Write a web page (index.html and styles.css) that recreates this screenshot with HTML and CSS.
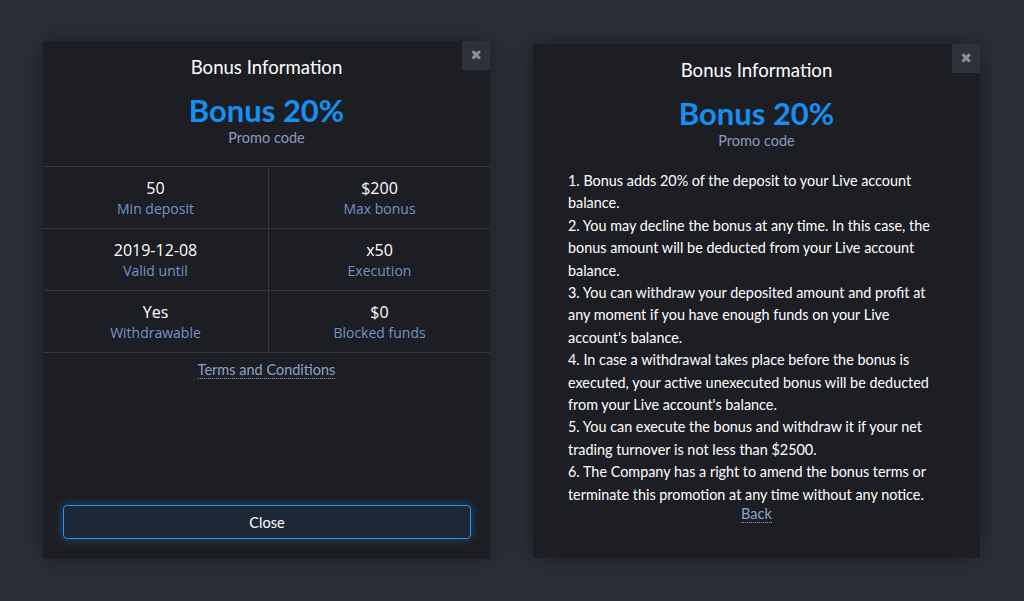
FILE: index.html
```html
<!DOCTYPE html>
<html lang="en">
<head>
  <meta charset="UTF-8">
  <title>Bonus Information</title>
  <link rel="stylesheet" href="styles.css">
</head>
<body>
<div class="page">

  <div class="modal modal-info">
    <span class="modal-close">&#10006;</span>
    <div class="modal-title">Bonus Information</div>
    <div class="bonus-name">Bonus 20%</div>
    <div class="bonus-sub">Promo code</div>

    <div class="bonus-grid">
      <div class="cell"><span class="value">50</span><span class="label">Min deposit</span></div>
      <div class="cell"><span class="value">$200</span><span class="label">Max bonus</span></div>
      <div class="cell"><span class="value">2019-12-08</span><span class="label">Valid until</span></div>
      <div class="cell"><span class="value">x50</span><span class="label">Execution</span></div>
      <div class="cell"><span class="value">Yes</span><span class="label">Withdrawable</span></div>
      <div class="cell"><span class="value">$0</span><span class="label">Blocked funds</span></div>
    </div>

    <div class="link-row"><a class="dotted" href="#">Terms and Conditions</a></div>

    <button class="btn-close">Close</button>
  </div>

  <div class="modal modal-terms">
    <span class="modal-close">&#10006;</span>
    <div class="modal-title">Bonus Information</div>
    <div class="bonus-name">Bonus 20%</div>
    <div class="bonus-sub">Promo code</div>

    <div class="terms">
      <p>1. Bonus adds 20% of the deposit to your Live account balance.</p>
      <p>2. You may decline the bonus at any time. In this case, the bonus amount will be deducted from your Live account balance.</p>
      <p>3. You can withdraw your deposited amount and profit at any moment if you have enough funds on your Live account's balance.</p>
      <p>4. In case a withdrawal takes place before the bonus is executed, your active unexecuted bonus will be deducted from your Live account's balance.</p>
      <p>5. You can execute the bonus and withdraw it if your net trading turnover is not less than $2500.</p>
      <p>6. The Company has a right to amend the bonus terms or terminate this promotion at any time without any notice.</p>
    </div>

    <div class="link-row link-back"><a class="dotted" href="#">Back</a></div>
  </div>

</div>
</body>
</html>
```

FILE: styles.css
```css
html, body {
  margin: 0;
  height: 100%;
}

body {
  background: #2b2e37;
  font-family: Lato, "Open Sans", sans-serif;
  color: #fff;
}

.page {
  display: flex;
  align-items: flex-start;
  gap: 43px;
  padding: 41px 0 0 43px;
}

.modal {
  position: relative;
  box-sizing: border-box;
  width: 447px;
  background: #1d1e23;
  box-shadow: 0 0 24px rgba(0, 0, 0, 0.35);
  display: flex;
  flex-direction: column;
  padding-top: 14px;
}

.modal-info {
  height: 518px;
  padding-bottom: 20px;
}

.modal-terms {
  height: 514px;
  margin-top: 3px;
}

.modal-close {
  position: absolute;
  top: 0;
  right: 0;
  width: 28px;
  height: 29px;
  background: #2e3139;
  color: #8b8e97;
  font-family: "DejaVu Sans", sans-serif;
  font-size: 14px;
  font-weight: bold;
  line-height: 29px;
  text-align: center;
}

.modal-title {
  text-align: center;
  font-size: 18.6px;
  line-height: 24px;
}

.bonus-name {
  margin-top: 13px;
  text-align: center;
  color: #1490f2;
  font-size: 31px;
  font-weight: bold;
  line-height: 36px;
}

.bonus-sub {
  text-align: center;
  color: #8a9bbd;
  font-size: 14.5px;
  line-height: 20px;
}

.bonus-grid {
  margin-top: 18px;
  display: grid;
  grid-template-columns: 226px 1fr;
  border-top: 1px solid #34363e;
  font-family: "Open Sans", sans-serif;
}

.cell {
  display: flex;
  flex-direction: column;
  align-items: center;
  padding: 10px 0 9px;
  border-bottom: 1px solid #34363e;
}

.cell:nth-child(odd) {
  border-right: 1px solid #34363e;
}

.value {
  font-size: 16px;
  line-height: 22px;
}

.label {
  font-size: 14px;
  line-height: 20px;
  color: #7393c2;
}

.link-row {
  margin-top: 7px;
  text-align: center;
  font-size: 14.5px;
  line-height: 20px;
}

.dotted {
  color: #8ba3c7;
  text-decoration: none;
  border-bottom: 1px dotted #8ba3c7;
}

.btn-close {
  margin: auto 19px 0 20px;
  height: 34px;
  background: #1d2836;
  border: 1px solid #2a8ef2;
  border-radius: 4px;
  box-shadow: 0 0 10px rgba(30, 140, 240, 0.45);
  color: #fff;
  font-family: Lato, sans-serif;
  font-size: 14.5px;
}

.terms {
  margin-top: 19px;
  padding: 0 35px;
  font-size: 14.4px;
  line-height: 22.4px;
}

.terms p {
  margin: 0;
}

.link-back {
  margin-top: -2px;
}
```
